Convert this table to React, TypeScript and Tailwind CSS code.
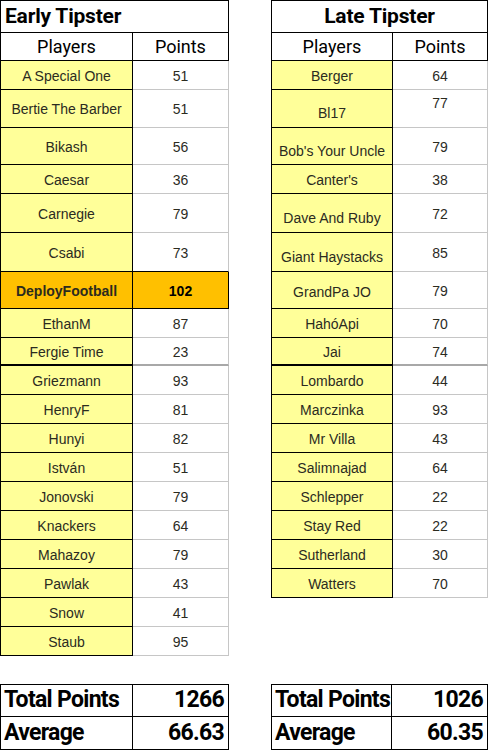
type Row = {
  name: string;
  pts: number;
  h: string;
  hi?: boolean;
  thick?: boolean;
  nameCls?: string;
  ptsCls?: string;
};

const early: Row[] = [
  { name: "A Special One", pts: 51, h: "h-[29px]" },
  { name: "Bertie The Barber", pts: 51, h: "h-[38px]" },
  { name: "Bikash", pts: 56, h: "h-[37px]" },
  { name: "Caesar", pts: 36, h: "h-[29px]" },
  { name: "Carnegie", pts: 79, h: "h-[39px]" },
  { name: "Csabi", pts: 73, h: "h-[39px]" },
  { name: "DeployFootball", pts: 102, h: "h-[37px]", hi: true },
  { name: "EthanM", pts: 87, h: "h-[29px]" },
  { name: "Fergie Time", pts: 23, h: "h-[28px]", thick: true },
  { name: "Griezmann", pts: 93, h: "h-[29px]" },
  { name: "HenryF", pts: 81, h: "h-[29px]" },
  { name: "Hunyi", pts: 82, h: "h-[29px]" },
  { name: "István", pts: 51, h: "h-[29px]" },
  { name: "Jonovski", pts: 79, h: "h-[29px]" },
  { name: "Knackers", pts: 64, h: "h-[29px]" },
  { name: "Mahazoy", pts: 79, h: "h-[29px]" },
  { name: "Pawlak", pts: 43, h: "h-[29px]" },
  { name: "Snow", pts: 41, h: "h-[29px]" },
  { name: "Staub", pts: 95, h: "h-[29px]" },
];

const late: Row[] = [
  { name: "Berger", pts: 64, h: "h-[29px]" },
  { name: "Bl17", pts: 77, h: "h-[38px]", nameCls: "pt-[10px]", ptsCls: "pb-[10px]" },
  { name: "Bob's Your Uncle", pts: 79, h: "h-[37px]", nameCls: "pt-[10px]" },
  { name: "Canter's", pts: 38, h: "h-[29px]" },
  { name: "Dave And Ruby", pts: 72, h: "h-[39px]", nameCls: "pt-[11px]" },
  { name: "Giant Haystacks", pts: 85, h: "h-[39px]", nameCls: "pt-[11px]" },
  { name: "GrandPa JO", pts: 79, h: "h-[37px]", nameCls: "pt-[5px]" },
  { name: "HahóApi", pts: 70, h: "h-[29px]" },
  { name: "Jai", pts: 74, h: "h-[28px]", thick: true },
  { name: "Lombardo", pts: 44, h: "h-[29px]" },
  { name: "Marczinka", pts: 93, h: "h-[29px]" },
  { name: "Mr Villa", pts: 43, h: "h-[29px]" },
  { name: "Salimnajad", pts: 64, h: "h-[29px]" },
  { name: "Schlepper", pts: 22, h: "h-[29px]" },
  { name: "Stay Red", pts: 22, h: "h-[29px]" },
  { name: "Sutherland", pts: 30, h: "h-[29px]" },
  { name: "Watters", pts: 70, h: "h-[29px]" },
];

const head = "font-['Roboto',sans-serif]";
const cell = "font-['Liberation_Sans',Arial,sans-serif] text-[14px] text-[#2b2b1f]";

function Table({
  title,
  rows,
  nameW,
  ptsW,
  centerTitle,
}: {
  title: string;
  rows: Row[];
  nameW: string;
  ptsW: string;
  centerTitle?: boolean;
}) {
  return (
    <div className="flex flex-col">
      <div
        className={`flex h-[33px] items-center border border-black ${head} text-[21px] font-bold tracking-[-0.2px] text-black ${
          centerTitle ? "justify-center" : "pl-[4px]"
        }`}
      >
        {title}
      </div>
      <div className={`flex h-[28px] border-x border-b border-black ${head} text-[18px] text-black`}>
        <div className={`${nameW} flex items-center justify-center border-r border-black`}>Players</div>
        <div className={`${ptsW} flex items-center justify-center`}>Points</div>
      </div>
      {rows.map((r, i) => {
        const nextHi = rows[i + 1]?.hi;
        return (
          <div key={r.name} className={`flex ${r.h} ${cell}`}>
            <div
              className={`${nameW} flex items-center justify-center border-x border-black ${
                r.thick ? "border-b-2" : "border-b"
              } ${r.hi ? "bg-[#ffc000] font-bold" : "bg-[#ffff99]"} ${r.nameCls ?? "pt-[2px]"}`}
            >
              {r.name}
            </div>
            <div
              className={`${ptsW} flex items-center justify-center ${r.thick ? "border-b-2" : "border-b"} ${
                r.hi
                  ? "border-r border-b-black border-r-black bg-[#ffc000] font-bold text-black"
                  : `border-r border-r-[#c6c6c6] bg-white ${nextHi ? "border-b-black" : r.thick ? "border-b-[#a8a8a8]" : "border-b-[#c6c6c6]"}`
              } ${r.ptsCls ?? "pt-[2px]"}`}
            >
              {r.pts}
            </div>
          </div>
        );
      })}
    </div>
  );
}

function Totals({ total, avg, nameW, ptsW }: { total: string; avg: string; nameW: string; ptsW: string }) {
  return (
    <div
      className={`flex flex-col whitespace-nowrap border border-black ${head} text-[23px] font-bold tracking-[-0.7px] text-black`}
    >
      <div className="flex h-[32px] border-b border-black">
        <div className={`${nameW} flex items-center border-r border-black pl-[3px]`}>Total Points</div>
        <div className={`${ptsW} flex items-center justify-end pr-[4px]`}>{total}</div>
      </div>
      <div className="flex h-[32px]">
        <div className={`${nameW} flex items-center border-r border-black pl-[3px]`}>Average</div>
        <div className={`${ptsW} flex items-center justify-end pr-[4px]`}>{avg}</div>
      </div>
    </div>
  );
}

export default function App() {
  return (
    <div className="flex h-[750px] w-[490px] gap-[42px] overflow-hidden bg-white">
      <div className="flex w-[229px] flex-col justify-between">
        <Table title="Early Tipster" rows={early} nameW="w-[133px]" ptsW="w-[96px]" />
        <Totals total="1266" avg="66.63" nameW="w-[133px]" ptsW="w-[96px]" />
      </div>
      <div className="flex w-[217px] flex-col justify-between">
        <Table title="Late Tipster" rows={late} nameW="w-[122px]" ptsW="w-[95px]" centerTitle />
        <Totals total="1026" avg="60.35" nameW="w-[121px]" ptsW="w-[96px]" />
      </div>
    </div>
  );
}
